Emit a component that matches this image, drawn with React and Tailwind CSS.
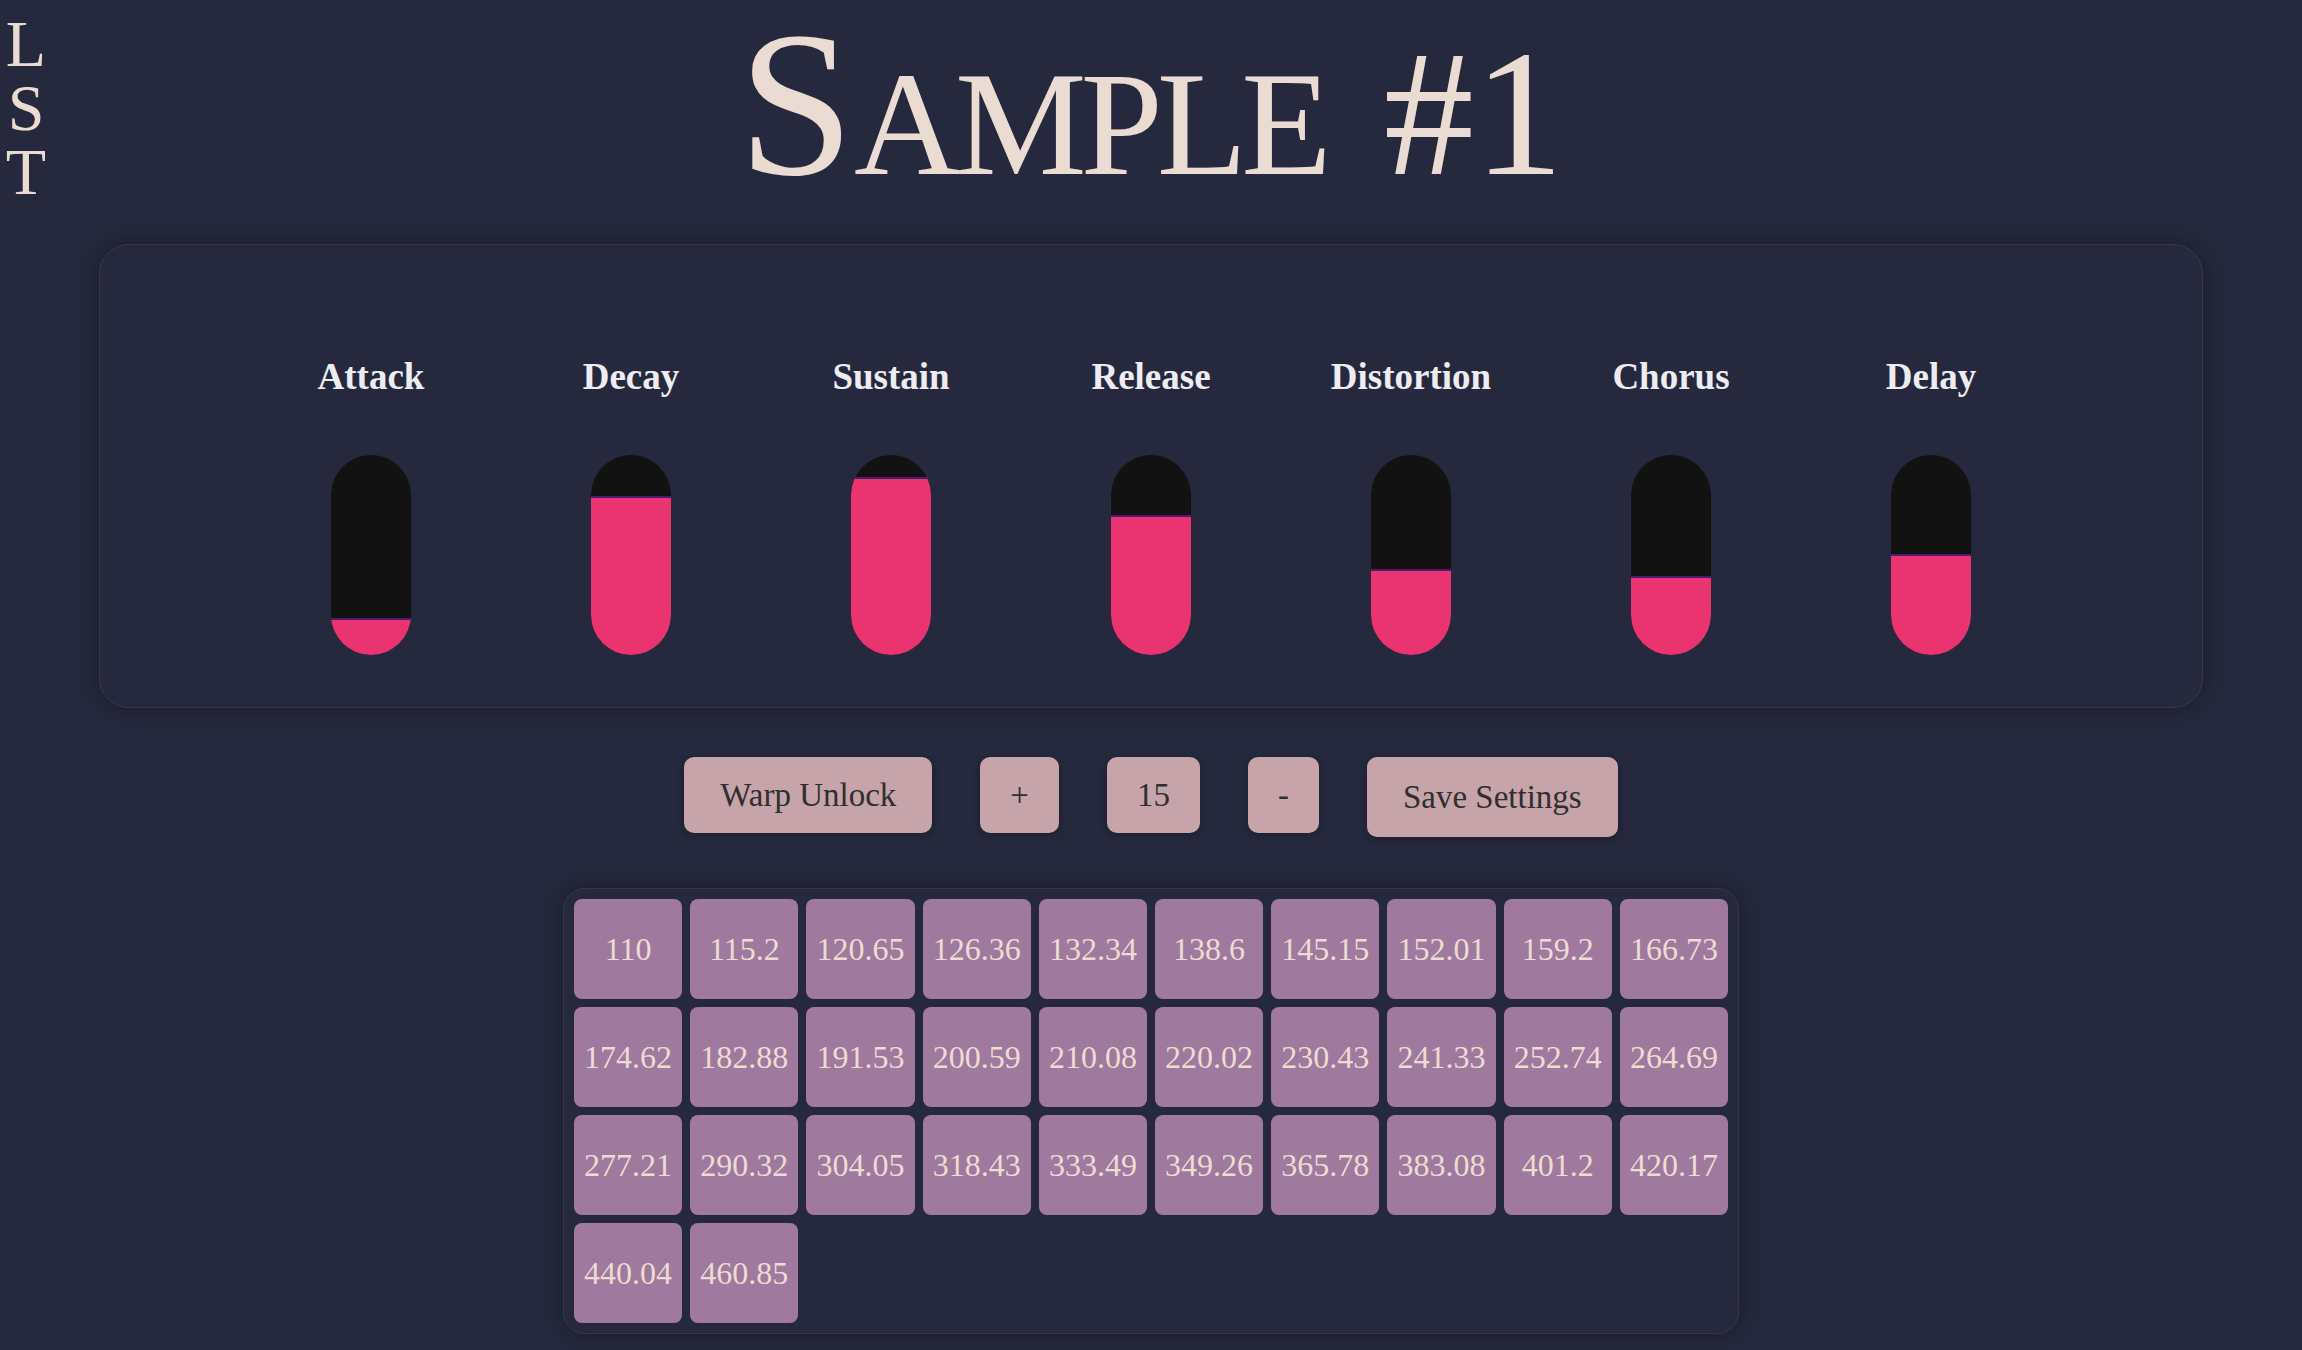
import React from 'react';

const sliders = [
  { name: 'Attack', value: 18.5 },
  { name: 'Decay', value: 79.5 },
  { name: 'Sustain', value: 89 },
  { name: 'Release', value: 70 },
  { name: 'Distortion', value: 43 },
  { name: 'Chorus', value: 39.5 },
  { name: 'Delay', value: 50.5 },
];

const frequencies = [
  '110', '115.2', '120.65', '126.36', '132.34', '138.6', '145.15', '152.01', '159.2', '166.73',
  '174.62', '182.88', '191.53', '200.59', '210.08', '220.02', '230.43', '241.33', '252.74', '264.69',
  '277.21', '290.32', '304.05', '318.43', '333.49', '349.26', '365.78', '383.08', '401.2', '420.17',
  '440.04', '460.85',
];

const Slider = ({ name, value }) => (
  <div className="flex w-[260px] flex-col items-center">
    <span className="text-[37px] font-bold leading-[44px] text-[#ececf1]">{name}</span>
    <div className="mt-[56px] flex h-[200px] w-[80px] flex-col justify-end overflow-hidden rounded-[40px] bg-[#121212]">
      <div className="border-t-2 border-[#4b1b6d] bg-[#ea3371]" style={{ height: `${value}%` }} />
    </div>
  </div>
);

const btn =
  'rounded-[10px] bg-[#c6a4aa] text-[33px] leading-[38px] text-[#2f2f2f] shadow-[0_2px_10px_rgba(0,0,0,0.3)]';

export default function App() {
  return (
    <div className="min-h-screen bg-[#26293e] font-['Liberation_Serif',serif]">
      {/* header */}
      <header className="flex items-start">
        <div className="flex w-[52px] flex-col pt-[12px] text-center text-[66px] leading-[64px] text-[#ebdcd3]">
          <span>L</span>
          <span>S</span>
          <span>T</span>
        </div>
        <h1 className="flex-1 text-center text-[208px] font-normal leading-none text-[#ebdcd3]">
          S<span className="text-[148px] uppercase tracking-[-6px]">ample</span>{' '}
          <span className="ml-[6px] text-[180px]">#1</span>
        </h1>
        <div className="w-[52px]" />
      </header>

      {/* envelope / effects sliders */}
      <section className="mx-auto mt-[36px] flex w-[2104px] justify-center rounded-[30px] border border-[#35384c] pb-[52px] pt-[110px] shadow-[0_0_24px_rgba(0,0,0,0.35)]">
        {sliders.map((s) => (
          <Slider key={s.name} name={s.name} value={s.value} />
        ))}
      </section>

      {/* controls */}
      <div className="mt-[49px] flex items-start justify-center gap-[48px]">
        <button className={`${btn} px-[36px] py-[19px]`}>Warp Unlock</button>
        <button className={`${btn} px-[30px] py-[19px]`}>+</button>
        <button className={`${btn} px-[30px] py-[19px]`}>15</button>
        <button className={`${btn} px-[30px] py-[19px]`}>-</button>
        <button className={`${btn} px-[36px] py-[21px]`}>Save Settings</button>
      </div>

      {/* note grid */}
      <div className="mx-auto mt-[51px] w-[1176px] rounded-[22px] border border-[#34374b] p-[10px] shadow-[0_0_24px_rgba(0,0,0,0.35)]">
        <div className="grid grid-cols-10 gap-[8px]">
          {frequencies.map((f) => (
            <div
              key={f}
              className="flex h-[100px] items-center justify-center rounded-[8px] bg-[#a0799e] text-[32px] text-[#ecdcd3]"
            >
              {f}
            </div>
          ))}
        </div>
      </div>
    </div>
  );
}
